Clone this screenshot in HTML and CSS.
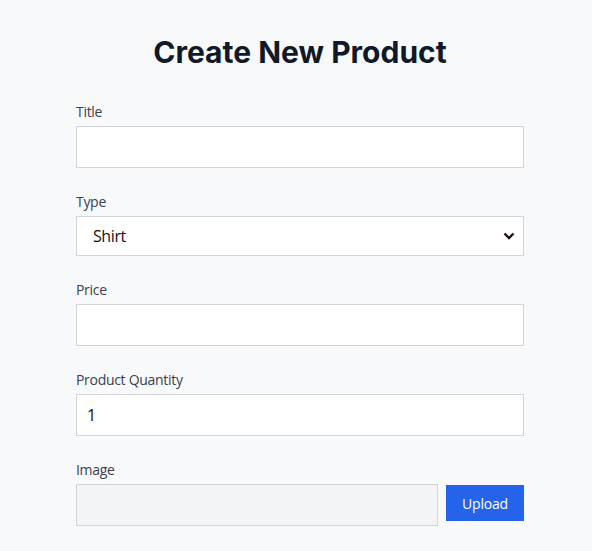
FILE: index.html
```html
<!DOCTYPE html>
<html>
<head>
<meta charset="utf-8">
<link rel="stylesheet" href="styles.css">
</head>
<body>
<div class="page">
  <form class="form">
    <h1 class="heading">Create New Product</h1>
    <div class="field">
      <label class="label">Title</label>
      <input class="input" type="text">
    </div>
    <div class="field">
      <label class="label">Type</label>
      <div class="select-wrap">
        <select class="select">
          <option>Shirt</option>
        </select>
        <svg class="chevron" width="12" height="8" viewBox="0 0 12 8"><path d="M1.5 1.5 L6 6 L10.5 1.5" fill="none" stroke="#1a0a14" stroke-width="2.4" stroke-linecap="butt"/></svg>
      </div>
    </div>
    <div class="field">
      <label class="label">Price</label>
      <input class="input" type="text">
    </div>
    <div class="field">
      <label class="label">Product Quantity</label>
      <input class="input" type="text" value="1">
    </div>
    <div class="field">
      <label class="label">Image</label>
      <div class="upload-row">
        <input class="input file" type="text" disabled>
        <button class="btn" type="button">Upload</button>
      </div>
    </div>
  </form>
</div>
</body>
</html>
```
FILE: styles.css
```css
html, body {
  margin: 0;
  padding: 0;
  background: #f8f9fb;
}
.page {
  padding: 0 0 0 8px;
}
.form {
  width: 448px;
  margin: 0 auto;
  display: flex;
  flex-direction: column;
}
.heading {
  font-family: Inter, "Liberation Sans", sans-serif;
  font-weight: 700;
  font-size: 30px;
  line-height: 36px;
  color: #111827;
  text-align: center;
  margin: 34px 0 31px;
}
.field {
  display: flex;
  flex-direction: column;
  margin-bottom: 23px;
}
.label {
  font-family: "Open Sans", "Noto Sans", sans-serif;
  font-size: 14px;
  letter-spacing: -0.3px;
  line-height: 20px;
  color: #374151;
  padding-top: 1px;
  margin-bottom: 4px;
}
.input {
  box-sizing: border-box;
  height: 42px;
  border: 1px solid #d1d5db;
  background: #fff;
  padding: 0 10px;
  font-family: "Open Sans", "Noto Sans", sans-serif;
  font-size: 16px;
  letter-spacing: -0.4px;
  color: #111;
  outline: none;
  margin: 0;
}
.select-wrap {
  position: relative;
}
.select {
  box-sizing: border-box;
  width: 100%;
  height: 40px;
  border: 1px solid #d1d5db;
  background: #fff;
  padding: 0 16px;
  font-family: "Open Sans", "Noto Sans", sans-serif;
  font-size: 16px;
  letter-spacing: -0.4px;
  color: #1a0a14;
  appearance: none;
  -webkit-appearance: none;
  border-radius: 0;
  outline: none;
  margin: 0;
}
.chevron {
  position: absolute;
  right: 9px;
  top: 16px;
  pointer-events: none;
}
.upload-row {
  display: flex;
  align-items: flex-start;
  gap: 8px;
}
.input.file {
  flex: 1;
  background: #f3f4f6;
  width: auto;
  min-width: 0;
}
.btn {
  width: 78px;
  height: 36px;
  margin-top: 1px;
  border: none;
  background: #2563eb;
  color: #fff;
  font-family: "Open Sans", "Noto Sans", sans-serif;
  font-size: 14px;
  letter-spacing: -0.2px;
  padding: 0;
  border-radius: 0;
}
```
